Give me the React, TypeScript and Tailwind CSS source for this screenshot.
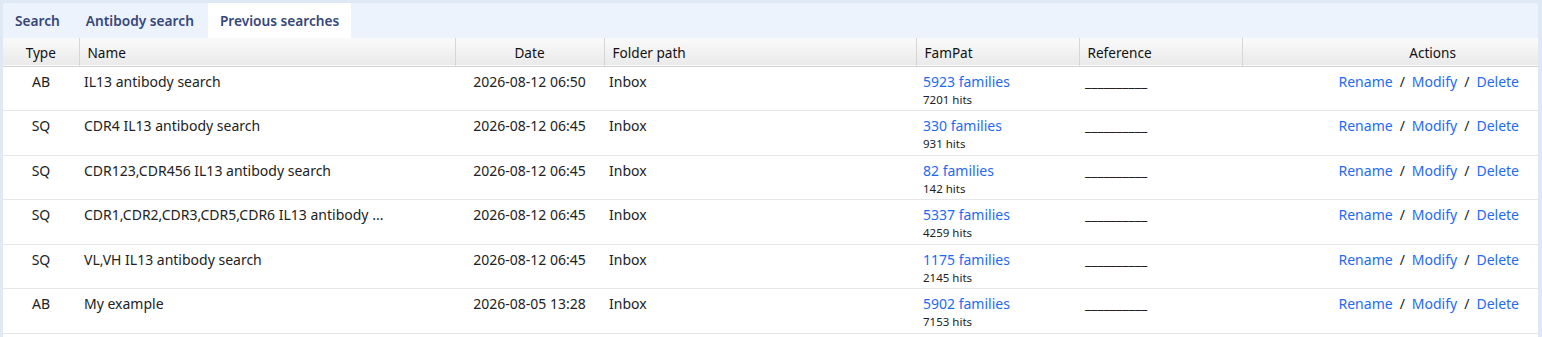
import { useState } from 'react';

interface SearchRow {
  type: string;
  name: string;
  date: string;
  families: number;
  hits: number;
}

const rows: SearchRow[] = [
  { type: 'AB', name: 'IL13 antibody search', date: '2026-08-12 06:50', families: 5923, hits: 7201 },
  { type: 'SQ', name: 'CDR4 IL13 antibody search', date: '2026-08-12 06:45', families: 330, hits: 931 },
  { type: 'SQ', name: 'CDR123,CDR456 IL13 antibody search', date: '2026-08-12 06:45', families: 82, hits: 142 },
  { type: 'SQ', name: 'CDR1,CDR2,CDR3,CDR5,CDR6 IL13 antibody search', date: '2026-08-12 06:45', families: 5337, hits: 4259 },
  { type: 'SQ', name: 'VL,VH IL13 antibody search', date: '2026-08-12 06:45', families: 1175, hits: 2145 },
  { type: 'AB', name: 'My example', date: '2026-08-05 13:28', families: 5902, hits: 7153 },
];

const tabs = ['Search', 'Antibody search', 'Previous searches'];

const headCell = 'h-[28px] pt-[2px] border-r border-[#d6d6d6] shadow-[1px_0_0_#ffffff] font-normal';

export default function App() {
  const [activeTab, setActiveTab] = useState(2);

  return (
    <div
      className="flex min-h-screen flex-col bg-[#dfe8f5] pt-[3px] pl-[3px] pr-[4px] text-[14px] text-[#222]"
      style={{ fontFamily: '"Noto Sans", "Open Sans", Arial, sans-serif' }}
    >
      <div className="flex-1 overflow-hidden rounded-t-[4px] bg-white">
        <div className="flex h-[35px] gap-[2px] bg-[#ecf3fd]">
          {tabs.map((tab, i) => (
            <button
              key={tab}
              onClick={() => setActiveTab(i)}
              className={`px-3 pt-[1px] text-[13.7px] font-semibold text-[#36477a] ${i === activeTab ? 'bg-white' : ''}`}
            >
              {tab}
            </button>
          ))}
        </div>

        <table className="w-full table-fixed border-collapse">
          <colgroup>
            <col className="w-[76px]" />
            <col className="w-[376px]" />
            <col className="w-[149px]" />
            <col className="w-[312px]" />
            <col className="w-[163px]" />
            <col className="w-[163px]" />
            <col />
          </colgroup>
          <thead>
            <tr className="bg-gradient-to-b from-[#fafafa] to-[#eaeaea] border-b border-[#d2d2d2] text-[13.6px] text-[#111]">
              <th className={`${headCell} text-center`}>Type</th>
              <th className={`${headCell} pl-2 text-left`}>Name</th>
              <th className={`${headCell} text-center`}>Date</th>
              <th className={`${headCell} pl-2 text-left`}>Folder path</th>
              <th className={`${headCell} pl-2 text-left`}>FamPat</th>
              <th className={`${headCell} pl-2 text-left`}>Reference</th>
              <th className="h-[28px] pt-[2px] pr-[82px] text-right font-normal">Actions</th>
            </tr>
          </thead>
          <tbody>
            {rows.map((row, i) => (
              <tr key={i} className="h-[44.5px] border-b border-[#e6e6e6] align-top leading-[20px]">
                <td className="pt-[5px] text-center">{row.type}</td>
                <td className="truncate pl-[5px] pr-2 pt-[5px]">
                  {row.name.length > 44 ? row.name.slice(0, 39) + ' ...' : row.name}
                </td>
                <td className="pt-[5px] text-center">{row.date}</td>
                <td className="pl-[5px] pt-[5px]">Inbox</td>
                <td className="pl-[7px] pt-[5px]">
                  <a href="#" className="block text-[#1f6af2]">
                    {row.families} families
                  </a>
                  <div className="text-[11.5px] leading-[16px]">{row.hits} hits</div>
                </td>
                <td className="pl-[6px] pt-[5px]">__________</td>
                <td className="pr-[19px] pt-[5px] text-right">
                  <a href="#" className="text-[#1f6af2]">Rename</a>
                  <span className="mx-[7px]">/</span>
                  <a href="#" className="text-[#1f6af2]">Modify</a>
                  <span className="mx-[7px]">/</span>
                  <a href="#" className="text-[#1f6af2]">Delete</a>
                </td>
              </tr>
            ))}
          </tbody>
        </table>
      </div>
    </div>
  );
}
